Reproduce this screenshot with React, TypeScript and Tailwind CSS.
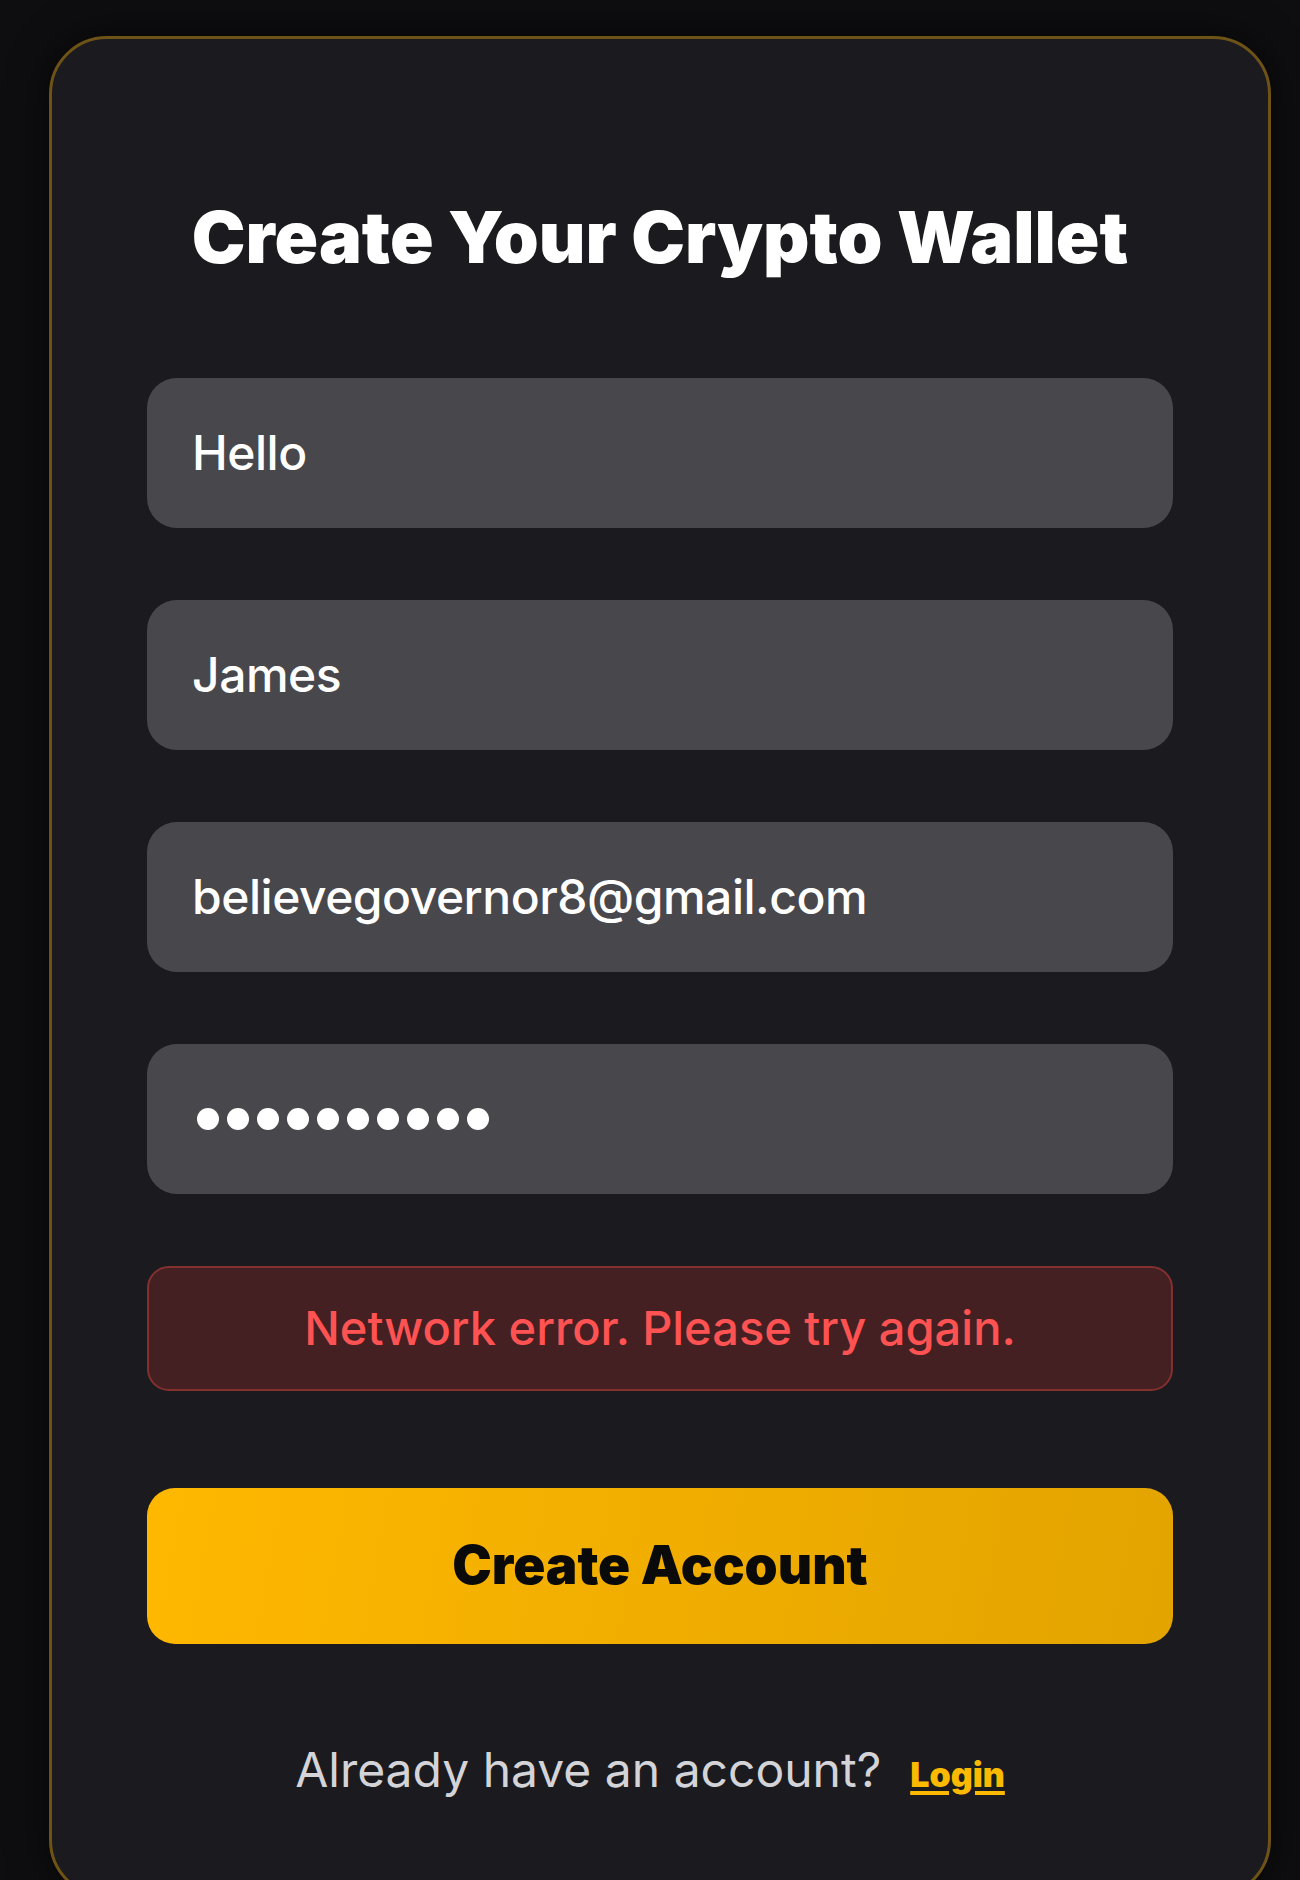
import React from "react";

export default function App() {
  const font = { fontFamily: "Inter, 'Noto Sans', sans-serif" };
  return (
    <div
      className="min-h-[1880px] w-full bg-[#0e0e10] pt-[36px] pb-[40px]"
      style={font}
    >
      <div className="ml-[49px] w-[1222px] rounded-[58px] border-[3px] border-[#6e5317] bg-[#1b1b1f] px-[95px] pt-[162px] pb-[101px] shadow-[0_0_40px_rgba(0,0,0,0.6)]">
        <h1 className="text-center text-[72px] leading-none font-black tracking-normal text-white">
          Create Your Crypto Wallet
        </h1>

        <div className="mt-[105px] flex flex-col gap-[72px]">
          <div className="flex h-[150px] items-center rounded-[30px] bg-[#48474c] pl-[45px] text-[48px] font-medium tracking-[-0.01em] text-white">
            Hello
          </div>
          <div className="flex h-[150px] items-center rounded-[30px] bg-[#48474c] pl-[45px] text-[48px] font-medium tracking-[-0.01em] text-white">
            James
          </div>
          <div className="flex h-[150px] items-center rounded-[30px] bg-[#48474c] pl-[45px] text-[48px] font-medium tracking-[-0.01em] text-white">
            believegovernor8@gmail.com
          </div>
          <div className="flex h-[150px] items-center gap-[8px] rounded-[30px] bg-[#48474c] pl-[50px]">
            {Array.from({ length: 10 }).map((_, i) => (
              <span key={i} className="block h-[22px] w-[22px] rounded-full bg-white" />
            ))}
          </div>
        </div>

        <div className="mt-[72px] flex h-[125px] items-center justify-center rounded-[22px] border-2 border-[#83302f] bg-[#452022] text-[47px] font-medium text-[#ff5253]">
          Network error. Please try again.
        </div>

        <button className="mt-[97px] flex h-[156px] w-full items-center justify-center rounded-[28px] bg-[linear-gradient(100deg,#ffb800,#e3a400)] text-[53px] font-black text-[#0a0a0a]">
          Create Account
        </button>

        <div className="mt-[102px] flex items-baseline justify-center pr-[20px] text-[48px] leading-none">
          <span className="text-[#d4d4d8]">Already have an account?</span>
          <a className="ml-[29px] text-[34px] font-black text-[#fbb900] underline decoration-[4px] underline-offset-[4px]">
            Login
          </a>
        </div>
      </div>
    </div>
  );
}
